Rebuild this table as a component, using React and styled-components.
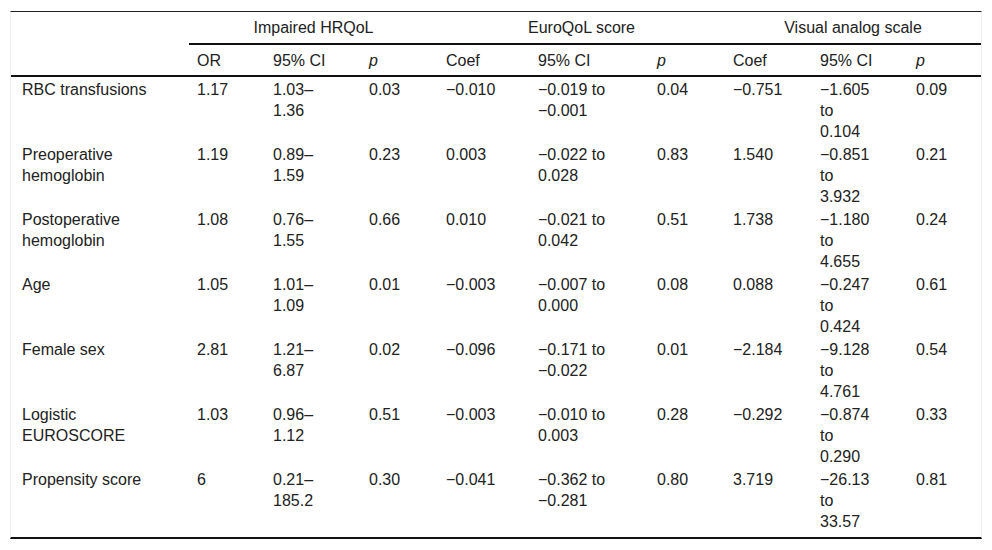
import React from 'react';
import styled, { createGlobalStyle } from 'styled-components';

const GlobalStyle = createGlobalStyle`
  html, body {
    margin: 0;
    padding: 0;
    background: #fff;
  }
`;

const Page = styled.div`
  padding: 11px 0 0 10px;
  font-family: 'Liberation Sans', Arial, Helvetica, sans-serif;
  color: #222;
`;

const Frame = styled.div`
  width: 970px;
  border-top: 1px solid #222;
  border-bottom: 2px solid #111;
  border-left: 1px solid #ececec;
  border-right: 1px solid #ececec;
`;

const Table = styled.table`
  width: 970px;
  table-layout: fixed;
  border-collapse: collapse;
  font-size: 16px;
  line-height: 21px;

  tbody tr:last-child td {
    padding-bottom: 5px;
  }
`;

const GroupHead = styled.th`
  font-weight: normal;
  text-align: center;
  padding: 5px 0 5px;
  border-bottom: 2px solid #111;
`;

const SubHead = styled.th`
  font-weight: normal;
  text-align: left;
  padding: 5px 32px 4px ${(p) => (p.$first ? '11px' : '8px')};
  border-bottom: 2px solid #111;
  font-style: ${(p) => (p.$italic ? 'italic' : 'normal')};
`;

const Cell = styled.td`
  vertical-align: top;
  text-align: left;
  padding: 2px 32px 0 ${(p) => (p.$first ? '11px' : '8px')};
`;

const widths = [178, 76, 96, 77, 92, 119, 76, 87, 96, 73];

const rows = [
  ['RBC transfusions', '1.17', '1.03–1.36', '0.03', '−0.010', '−0.019 to −0.001', '0.04', '−0.751', '−1.605 to 0.104', '0.09'],
  ['Preoperative hemoglobin', '1.19', '0.89–1.59', '0.23', '0.003', '−0.022 to 0.028', '0.83', '1.540', '−0.851 to 3.932', '0.21'],
  ['Postoperative hemoglobin', '1.08', '0.76–1.55', '0.66', '0.010', '−0.021 to 0.042', '0.51', '1.738', '−1.180 to 4.655', '0.24'],
  ['Age', '1.05', '1.01–1.09', '0.01', '−0.003', '−0.007 to 0.000', '0.08', '0.088', '−0.247 to 0.424', '0.61'],
  ['Female sex', '2.81', '1.21–6.87', '0.02', '−0.096', '−0.171 to −0.022', '0.01', '−2.184', '−9.128 to 4.761', '0.54'],
  ['Logistic EUROSCORE', '1.03', '0.96–1.12', '0.51', '−0.003', '−0.010 to 0.003', '0.28', '−0.292', '−0.874 to 0.290', '0.33'],
  ['Propensity score', '6', '0.21–185.2', '0.30', '−0.041', '−0.362 to −0.281', '0.80', '3.719', '−26.13 to 33.57', '0.81'],
];

const subHeads = ['OR', '95% CI', 'p', 'Coef', '95% CI', 'p', 'Coef', '95% CI', 'p'];

export default function App() {
  return (
    <Page>
      <GlobalStyle />
      <Frame>
        <Table>
          <colgroup>
            {widths.map((w, i) => (
              <col key={i} style={{ width: w }} />
            ))}
          </colgroup>
          <thead>
            <tr>
              <SubHead $first rowSpan={2} />
              <GroupHead colSpan={3}>Impaired HRQoL</GroupHead>
              <GroupHead colSpan={3}>EuroQoL score</GroupHead>
              <GroupHead colSpan={3}>Visual analog scale</GroupHead>
            </tr>
            <tr>
              {subHeads.map((h, i) => (
                <SubHead key={i} $italic={h === 'p'}>{h}</SubHead>
              ))}
            </tr>
          </thead>
          <tbody>
            {rows.map((r) => (
              <tr key={r[0]}>
                {r.map((v, i) => (
                  <Cell key={i} $first={i === 0}>{v}</Cell>
                ))}
              </tr>
            ))}
          </tbody>
        </Table>
      </Frame>
    </Page>
  );
}
